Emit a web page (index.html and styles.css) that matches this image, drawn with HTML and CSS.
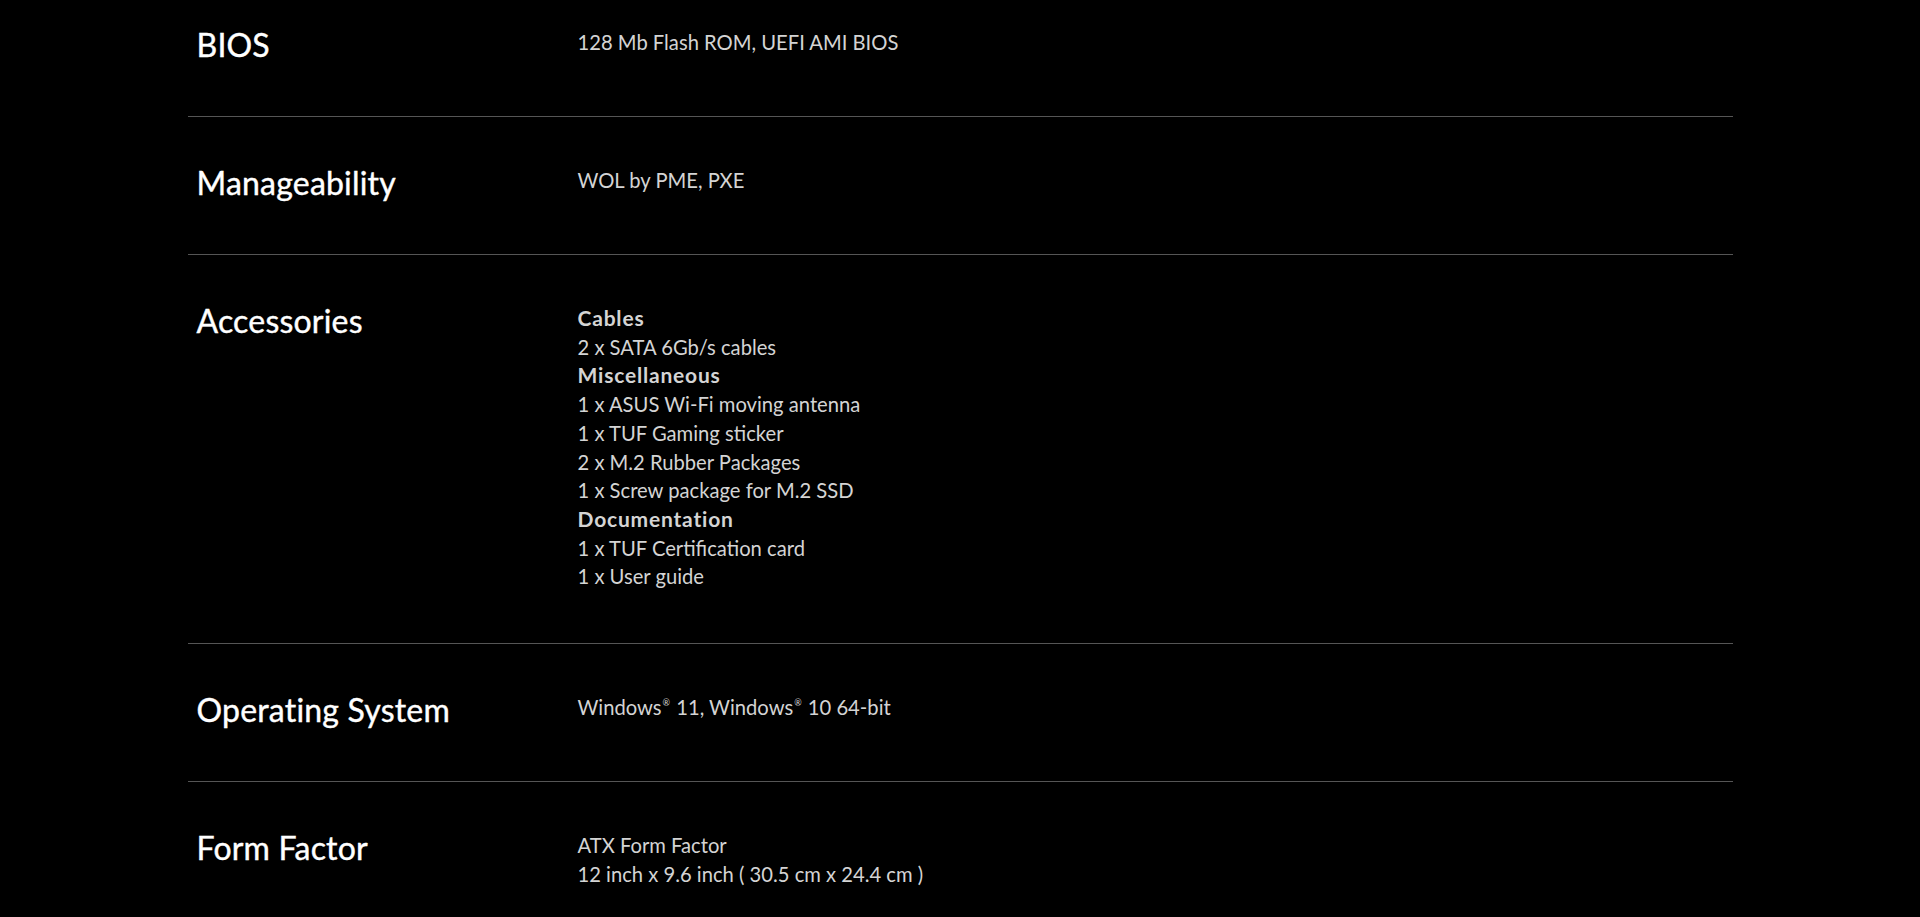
FILE: index.html
```html
<!DOCTYPE html>
<html lang="en">

<head>
    <meta charset="UTF-8">
    <meta name="viewport" content="width=device-width, initial-scale=1.0">
    <title>Specifications</title>
    <link rel="stylesheet" href="styles.css">
</head>

<body>
    <!-- Spec table -->
    <div class="specs">
        <div class="spec-row">
            <h3 class="spec-label">BIOS</h3>
            <div class="spec-value">128 Mb Flash ROM, UEFI AMI BIOS</div>
        </div>
        <div class="spec-row">
            <h3 class="spec-label">Manageability</h3>
            <div class="spec-value">WOL by PME, PXE</div>
        </div>
        <div class="spec-row">
            <h3 class="spec-label">Accessories</h3>
            <div class="spec-value">
                <b>Cables</b><br>
                2 x SATA 6Gb/s cables<br>
                <b>Miscellaneous</b><br>
                1 x ASUS Wi-Fi moving antenna<br>
                1 x TUF Gaming sticker<br>
                2 x M.2 Rubber Packages<br>
                1 x Screw package for M.2 SSD<br>
                <b>Documentation</b><br>
                1 x TUF Certification card<br>
                1 x User guide
            </div>
        </div>
        <div class="spec-row">
            <h3 class="spec-label">Operating System</h3>
            <div class="spec-value">Windows<sup>&reg;</sup> 11, Windows<sup>&reg;</sup> 10 64-bit</div>
        </div>
        <div class="spec-row">
            <h3 class="spec-label">Form Factor</h3>
            <div class="spec-value">ATX Form Factor<br>12 inch x 9.6 inch ( 30.5 cm x 24.4 cm )</div>
        </div>
    </div>
</body>

</html>
```

FILE: styles.css
```css
/* General reset */
* {
    margin: 0;
    padding: 0;
    box-sizing: border-box;
}

body {
    background: #000;
    color: #fff;
    overflow: hidden;
}

/* Spec table */
.specs {
    width: 1545px;
    margin: -21px auto 0;
}

.spec-row {
    display: grid;
    grid-template-columns: 390px 1fr;
    padding: 48px 0 53px;
    border-bottom: 1px solid #555;
}

.spec-label {
    font-family: 'Lato', sans-serif;
    font-weight: 400;
    font-size: 32px;
    line-height: 36px;
    letter-spacing: 0.2px;
    color: #fff;
    -webkit-text-stroke: 0.4px #fff;
    padding-left: 9px;
}

.spec-value {
    font-family: 'Lato', sans-serif;
    font-size: 20.2px;
    line-height: 28.7px;
    color: #d4d4d4;
    padding-top: 1px;
    margin-bottom: -1px;
}

/* Group headings inside a value */
.spec-value b {
    font-weight: 700;
    font-size: 21px;
    letter-spacing: 0.8px;
}

.spec-value sup {
    font-size: 9px;
    line-height: 0;
    vertical-align: 9px;
    margin: 0 1px;
}
```
